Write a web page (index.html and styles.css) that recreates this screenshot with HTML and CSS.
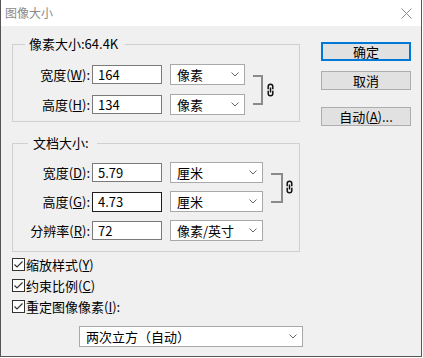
FILE: index.html
```html
<!DOCTYPE html>
<html lang="zh-CN">
<head>
<meta charset="utf-8">
<title>图像大小</title>
<link rel="stylesheet" href="styles.css">
</head>
<body>
<div class="window">
  <div class="titlebar">
    <span class="title">图像大小</span>
    <svg class="close" width="11" height="11" viewBox="0 0 11 11"><path d="M0.5 0.5 L10.5 10.5 M10.5 0.5 L0.5 10.5" stroke="#8a8a8a" stroke-width="1" fill="none"/></svg>
  </div>
  <div class="content">
    <div class="main">
      <fieldset class="group g1">
        <legend>像素大小:64.4K</legend>
        <div class="linked">
          <div class="rows">
            <div class="row">
              <span class="lbl">宽度(<u>W</u>):</span>
              <div class="input">164</div>
              <div class="select s-short"><span>像素</span><svg class="chev" width="8" height="5" viewBox="0 0 8 5"><polyline points="0.5,0.5 4,4 7.5,0.5" stroke="#666" fill="none"/></svg></div>
            </div>
            <div class="row">
              <span class="lbl">高度(<u>H</u>):</span>
              <div class="input">134</div>
              <div class="select s-short"><span>像素</span><svg class="chev" width="8" height="5" viewBox="0 0 8 5"><polyline points="0.5,0.5 4,4 7.5,0.5" stroke="#666" fill="none"/></svg></div>
            </div>
          </div>
          <div class="bracket b1"></div>
          <svg class="chain c1" width="7" height="14" viewBox="0 0 7 14"><path d="M1.2 6.2 V3.6 a2.3 2.3 0 0 1 4.6 0 V6.2 M1.2 7.8 V10.4 a2.3 2.3 0 0 0 4.6 0 V7.8 M3.5 4.6 V9.4" stroke="#111" stroke-width="1.5" fill="none"/></svg>
        </div>
      </fieldset>

      <fieldset class="group g2">
        <legend>文档大小:</legend>
        <div class="linked">
          <div class="rows">
            <div class="row">
              <span class="lbl">宽度(<u>D</u>):</span>
              <div class="input">5.79</div>
              <div class="select s-long"><span>厘米</span><svg class="chev" width="8" height="5" viewBox="0 0 8 5"><polyline points="0.5,0.5 4,4 7.5,0.5" stroke="#666" fill="none"/></svg></div>
            </div>
            <div class="row">
              <span class="lbl">高度(<u>G</u>):</span>
              <div class="input focused">4.73</div>
              <div class="select s-long"><span>厘米</span><svg class="chev" width="8" height="5" viewBox="0 0 8 5"><polyline points="0.5,0.5 4,4 7.5,0.5" stroke="#666" fill="none"/></svg></div>
            </div>
          </div>
          <div class="bracket b2"></div>
          <svg class="chain c2" width="7" height="14" viewBox="0 0 7 14"><path d="M1.2 6.2 V3.6 a2.3 2.3 0 0 1 4.6 0 V6.2 M1.2 7.8 V10.4 a2.3 2.3 0 0 0 4.6 0 V7.8 M3.5 4.6 V9.4" stroke="#111" stroke-width="1.5" fill="none"/></svg>
        </div>
        <div class="row row-res">
          <span class="lbl">分辨率(<u>R</u>):</span>
          <div class="input">72</div>
          <div class="select s-long"><span>像素/英寸</span><svg class="chev" width="8" height="5" viewBox="0 0 8 5"><polyline points="0.5,0.5 4,4 7.5,0.5" stroke="#666" fill="none"/></svg></div>
        </div>
      </fieldset>

      <div class="checks">
        <div class="check"><span class="box"><svg width="11" height="11" viewBox="0 0 11 11"><polyline points="1.5,5.5 4,8 9.5,2.5" stroke="#333" stroke-width="1.2" fill="none"/></svg></span><span>缩放样式(<u>Y</u>)</span></div>
        <div class="check"><span class="box"><svg width="11" height="11" viewBox="0 0 11 11"><polyline points="1.5,5.5 4,8 9.5,2.5" stroke="#333" stroke-width="1.2" fill="none"/></svg></span><span>约束比例(<u>C</u>)</span></div>
        <div class="check"><span class="box"><svg width="11" height="11" viewBox="0 0 11 11"><polyline points="1.5,5.5 4,8 9.5,2.5" stroke="#333" stroke-width="1.2" fill="none"/></svg></span><span>重定图像像素(<u>I</u>):</span></div>
      </div>

      <div class="select s-wide"><span>两次立方（自动）</span><svg class="chev" width="8" height="5" viewBox="0 0 8 5"><polyline points="0.5,0.5 4,4 7.5,0.5" stroke="#666" fill="none"/></svg></div>
    </div>

    <div class="buttons">
      <div class="btn default">确定</div>
      <div class="btn cancel">取消</div>
      <div class="btn auto">自动(<u>A</u>)...</div>
    </div>
  </div>
</div>
</body>
</html>
```

FILE: styles.css
```css
html, body {
  margin: 0;
  padding: 0;
  background: #ffffff;
}

body {
  font-family: "Noto Sans CJK SC", "Microsoft YaHei", sans-serif;
  font-size: 13px;
  line-height: 17px;
  color: #000;
}

.window {
  width: 422px;
  height: 357px;
  box-sizing: border-box;
  border: 1px solid #555;
  border-top: 0;
  background: #f0f0f0;
  display: flex;
  flex-direction: column;
}

.titlebar {
  height: 26px;
  flex: none;
  background: #fff;
  display: flex;
  align-items: center;
  justify-content: space-between;
  padding: 0 9px 0 4px;
}

.title {
  font-size: 12px;
  color: #8a8a8a;
  line-height: 16px;
}

.close {
  display: block;
}

.content {
  display: flex;
  padding: 10px 0 0 11px;
}

.main {
  width: 288px;
  display: flex;
  flex-direction: column;
}

.group {
  margin: 0;
  border: 1px solid #d0d0d0;
  min-width: 0;
}

.group legend {
  line-height: 16px;
  padding: 0;
}

.g1 {
  padding: 12px 0 6px 0;
}

.g1 legend {
  margin-left: 12px;
  padding: 0 7px 0 4px;
}

.g2 {
  margin-top: 13px;
  padding: 11px 0 10px 0;
}

.g2 legend {
  margin-left: 15px;
  padding: 0 8px 0 5px;
}

.linked {
  display: flex;
  align-items: flex-start;
}

.rows {
  display: flex;
  flex-direction: column;
}

.g1 .rows {
  gap: 9px;
}

.g2 .rows {
  gap: 8px;
}

.row {
  display: flex;
  align-items: center;
  height: 21px;
}

.row-res {
  margin-top: 8px;
}

.lbl {
  width: 79px;
  box-sizing: border-box;
  padding-right: 2px;
  text-align: right;
  white-space: nowrap;
}

.input {
  width: 70px;
  height: 19px;
  box-sizing: border-box;
  border: 1px solid #7a7a7a;
  background: #fff;
  padding-left: 5px;
  line-height: 17px;
  margin-right: 8px;
}

.input.focused {
  height: 20px;
  border-color: #1e1e1e;
}

.select {
  height: 21px;
  box-sizing: border-box;
  border: 1px solid #a9a9a9;
  background: #fff;
  display: flex;
  align-items: center;
  justify-content: space-between;
  padding: 0 5px 0 6px;
  line-height: 17px;
}

.chev {
  display: block;
}

.s-short {
  width: 75px;
}

.s-long {
  width: 93px;
}

.s-wide {
  width: 224px;
  margin: 9px 0 0 67px;
}

.bracket {
  box-sizing: border-box;
  height: 30px;
  margin-top: 11px;
  margin-left: 8px;
  border: 2px solid #8a8a8a;
  border-left: 0;
}

.b1 {
  width: 10px;
}

.b2 {
  width: 12px;
}

.chain {
  display: block;
  align-self: center;
}

.c1 {
  margin-left: 4px;
}

.c2 {
  margin-left: 3px;
}

.checks {
  margin-top: 2px;
  display: flex;
  flex-direction: column;
}

.check {
  height: 21px;
  display: flex;
  align-items: center;
}

.box {
  width: 13px;
  height: 13px;
  box-sizing: border-box;
  border: 1px solid #333;
  background: #fff;
  margin-right: 1px;
  display: flex;
  align-items: center;
  justify-content: center;
}

.box svg {
  display: block;
}

.buttons {
  margin-left: 21px;
  margin-top: 6px;
  width: 90px;
  display: flex;
  flex-direction: column;
}

.btn {
  height: 19px;
  box-sizing: border-box;
  border: 1px solid #adadad;
  background: #e1e1e1;
  text-align: center;
  line-height: 17px;
}

.btn.default {
  border: 2px solid #0078d7;
  line-height: 15px;
}

.btn.cancel {
  margin-top: 10px;
}

.btn.auto {
  margin-top: 17px;
}
```
